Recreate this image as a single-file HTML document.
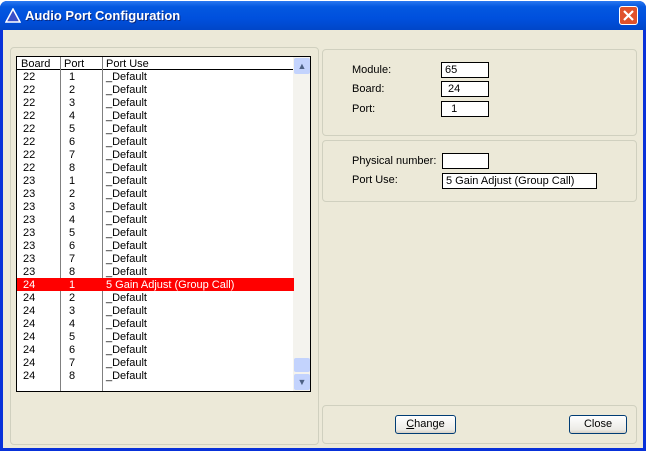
<!DOCTYPE html><html><head><style>
body{margin:0;width:648px;height:451px;overflow:hidden;background:#fff;font-family:"Liberation Sans",sans-serif;font-size:11px;position:relative}
.a{position:absolute}
.win{left:0;top:1px;width:646px;height:450px;background:#0831d9;border-radius:7px 7px 0 0}
.tb{left:0;top:1px;width:646px;height:29px;background:linear-gradient(#2a78f0,#0458e0 20%,#0050dd 60%,#0046c8);border-radius:7px 7px 0 0}
.body{left:3px;top:30px;width:640px;height:418px;background:#ece9d8}
.grp{border:1px solid #d0d0bf;border-radius:4px}
.box{background:#fff;border:1px solid #000;box-sizing:border-box;padding-left:3px;line-height:14px}
.btn{border:1px solid #003c74;border-radius:3px;background:linear-gradient(#fff,#ecebe6 80%,#d6d0c5);text-align:center;line-height:17px;box-sizing:border-box}
.row{position:absolute;left:0;height:13px;line-height:13px;width:277px}
.row span{position:absolute;top:1px}
</style></head><body>
<div class="a win"></div>
<div class="a tb"></div>
<svg class="a" style="left:5px;top:8px" width="16" height="15"><polygon points="8,1 15,14 1,14" fill="#3a4fc8" stroke="#fff" stroke-width="1.5"/></svg>
<div class="a" style="left:25px;top:8px;color:#fff;font-weight:bold;font-size:13px;text-shadow:1px 1px #0a2a80">Audio Port Configuration</div>
<div class="a" style="left:619px;top:6px;width:19px;height:19px;border:1px solid #fff;border-radius:3px;background:#e0512b;box-sizing:border-box"><svg width="17" height="17"><path d="M4 4L13 13M13 4L4 13" stroke="#fff" stroke-width="2.2"/></svg></div>
<div class="a body"></div>
<div class="a grp" style="left:10px;top:47px;width:307px;height:396px"></div>
<div class="a grp" style="left:322px;top:49px;width:313px;height:85px"></div>
<div class="a grp" style="left:322px;top:140px;width:313px;height:60px"></div>
<div class="a grp" style="left:322px;top:405px;width:313px;height:37px"></div>
<div class="a" style="left:16px;top:56px;width:295px;height:336px;background:#fff;border:1px solid #000;box-sizing:border-box;overflow:hidden">
<div class="a" style="left:0;top:0;width:277px;height:12px;border-bottom:1px solid #000;line-height:12px"><span class="a" style="left:4px;top:1px">Board</span><span class="a" style="left:47px;top:1px">Port</span><span class="a" style="left:89px;top:1px">Port Use</span></div>
<div class="a" style="left:43px;top:0;width:1px;height:336px;background:#808080"></div>
<div class="a" style="left:85px;top:0;width:1px;height:336px;background:#808080"></div>
<div class="a" style="left:276px;top:0;width:18px;height:334px;background:#f4f3ee"></div>
<div class="a" style="left:277px;top:1px;width:16px;height:16px;background:#c3d3fd;border-radius:2px;text-align:center;color:#4d6185;font-size:9px;line-height:16px">&#9650;</div>
<div class="a" style="left:277px;top:301px;width:16px;height:14px;background:#c3d3fd;border-radius:2px"></div>
<div class="a" style="left:277px;top:317px;width:16px;height:16px;background:#c3d3fd;border-radius:2px;text-align:center;color:#4d6185;font-size:9px;line-height:16px">&#9660;</div>
<div id="rows"></div>
</div>
<div class="a" style="left:352px;top:64px">Module:</div>
<div class="a" style="left:352px;top:83px">Board:</div>
<div class="a" style="left:352px;top:103px">Port:</div>
<div class="a box" style="left:441px;top:62px;width:48px;height:16px">65</div>
<div class="a box" style="left:441px;top:81px;width:48px;height:16px">&nbsp;24</div>
<div class="a box" style="left:441px;top:101px;width:48px;height:16px">&nbsp;&nbsp;1</div>
<div class="a" style="left:352px;top:155px">Physical number:</div>
<div class="a" style="left:352px;top:174px">Port Use:</div>
<div class="a box" style="left:442px;top:153px;width:47px;height:16px"></div>
<div class="a box" style="left:442px;top:173px;width:155px;height:16px">5 Gain Adjust (Group Call)</div>
<div class="a btn" style="left:395px;top:415px;width:61px;height:19px"><u>C</u>hange</div>
<div class="a btn" style="left:569px;top:415px;width:58px;height:19px">Close</div>
<script>
var h='',i=0;
for(var b=22;b<=24;b++)for(var p=1;p<=8;p++){var t=13+i*13;var sel=(b==24&&p==1);
h+='<div class="row" style="top:'+t+'px;'+(sel?'background:#f00;color:#fff':'')+'"><span style="left:6px">'+b+'</span><span style="left:52px">'+p+'</span><span style="left:89px">'+(sel?'5 Gain Adjust (Group Call)':'_Default')+'</span></div>';i++;}
document.getElementById('rows').innerHTML=h;
</script>
</body></html>
